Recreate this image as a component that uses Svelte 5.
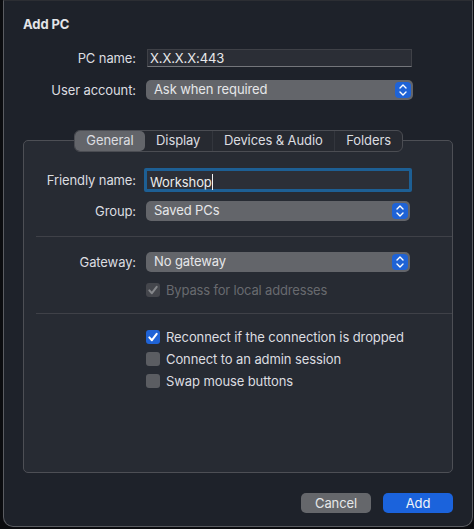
<script>
  const tabs = ['General', 'Display', 'Devices & Audio', 'Folders'];
  const options = [
    { label: 'Reconnect if the connection is dropped', on: true },
    { label: 'Connect to an admin session', on: false },
    { label: 'Swap mouse buttons', on: false }
  ];
</script>

{#snippet arrows()}
  <span class="stepper">
    <svg width="10" height="14" viewBox="0 0 10 14" fill="none" stroke="#fff" stroke-width="1.4" stroke-linecap="round" stroke-linejoin="round">
      <path d="M2 5 L5 2 L8 5" />
      <path d="M2 9 L5 12 L8 9" />
    </svg>
  </span>
{/snippet}

{#snippet tick()}
  <svg width="12" height="12" viewBox="0 0 12 12" fill="none" stroke="currentColor" stroke-width="2" stroke-linecap="round" stroke-linejoin="round">
    <path d="M2.3 6.4 L4.9 9.2 L9.7 2.8" />
  </svg>
{/snippet}

<div class="sheet">
  <h1>Add PC</h1>

  <div class="top-form">
    <span class="label">PC name:</span>
    <div class="field">X.X.X.X:443</div>
    <span class="label">User account:</span>
    <div class="popup wide">Ask when required {@render arrows()}</div>
  </div>

  <div class="panel">
    <div class="tabs">
      {#each tabs as tab, i}
        <div class="tab" class:active={i === 0}>{tab}</div>
      {/each}
    </div>

    <div class="inner-form first">
      <span class="label">Friendly name:</span>
      <div class="focus-field">Workshop<i class="caret"></i></div>
      <span class="label">Group:</span>
      <div class="popup">Saved PCs {@render arrows()}</div>
    </div>

    <hr />

    <div class="inner-form">
      <span class="label">Gateway:</span>
      <div class="popup">No gateway {@render arrows()}</div>
    </div>
    <div class="check disabled bypass">
      <span class="box">{@render tick()}</span>
      Bypass for local addresses
    </div>

    <hr class="tight" />

    <div class="options">
      {#each options as opt}
        <div class="check">
          <span class="box" class:on={opt.on}>{#if opt.on}{@render tick()}{/if}</span>
          {opt.label}
        </div>
      {/each}
    </div>
  </div>

  <div class="actions">
    <button class="btn">Cancel</button>
    <button class="btn primary">Add</button>
  </div>
</div>

<style>
  :global(body) {
    margin: 0;
    background: #0b0c0f;
  }
  .sheet {
    box-sizing: border-box;
    width: 470px;
    height: 527px;
    margin-left: 3px;
    padding: 15px 19px 0 19px;
    background: #1e222a;
    border: 1px solid #5a5c61;
    border-top-color: #2c2e33;
    border-radius: 0 0 10px 10px;
    color: #dcdde0;
    font-family: Inter, "Liberation Sans", sans-serif;
    font-size: 13px;
    line-height: 16px;
    letter-spacing: -0.1px;
  }
  h1 {
    margin: 0;
    font-size: 13px;
    line-height: 16px;
    font-weight: 700;
    color: #e4e5e8;
  }
  .top-form {
    display: grid;
    grid-template-columns: 113px 267px;
    column-gap: 10px;
    row-gap: 13px;
    align-items: center;
    margin-top: 17px;
  }
  .label {
    text-align: right;
  }
  .field {
    box-sizing: border-box;
    height: 18px;
    margin: 0 1px;
    padding: 0 2px;
    line-height: 17px;
    background: #2b2e36;
    border: 1px solid #3f4147;
    border-bottom-color: #74767b;
    color: #e8e9eb;
  }
  .popup {
    position: relative;
    box-sizing: border-box;
    height: 20px;
    padding-left: 8px;
    line-height: 18px;
    background: #63656a;
    border-radius: 5px;
    color: #e6e7e9;
  }
  .stepper {
    position: absolute;
    top: 2px;
    right: 2px;
    width: 16px;
    height: 16px;
    display: flex;
    align-items: center;
    justify-content: center;
    background: #1f63d6;
    border-radius: 4px;
  }
  .panel {
    box-sizing: border-box;
    height: 333px;
    margin-top: 40px;
    padding: 0 12px;
    background: #272b33;
    border: 1px solid #4d4f55;
    border-radius: 5px;
  }
  .tabs {
    display: flex;
    width: max-content;
    box-sizing: border-box;
    height: 22px;
    margin: -11px 0 0 38px;
    background: #272a31;
    border: 1px solid #4b4d53;
    border-radius: 6px;
  }
  .tab {
    padding: 0 11.3px;
    line-height: 19px;
    color: #dcdde0;
    border-right: 1px solid #33363d;
  }
  .tab:last-child {
    border-right: 0;
  }
  .tab.active {
    background: #63656a;
    border-radius: 5px;
    border-right: 0;
  }
  .inner-form {
    display: grid;
    grid-template-columns: 100px 264px;
    column-gap: 10px;
    row-gap: 9px;
    align-items: center;
  }
  .inner-form.first {
    margin-top: 16px;
  }
  .focus-field {
    box-sizing: border-box;
    height: 24px;
    margin: 0 -2px;
    padding: 2px 0 0 3px;
    line-height: 18px;
    background: #2c2f37;
    border: 3px solid #1d5f94;
    border-radius: 2px;
    color: #eceded;
  }
  .caret {
    display: inline-block;
    width: 1px;
    height: 16px;
    vertical-align: -3px;
    background: #f2f2f2;
  }
  hr {
    margin: 15px -12px 15px 0;
    border: 0;
    border-top: 1px solid #3f4148;
  }
  hr.tight {
    margin-top: 12px;
  }
  .check {
    display: flex;
    align-items: center;
    gap: 6px;
    height: 22px;
    margin-left: 110px;
    white-space: nowrap;
  }
  .box {
    box-sizing: border-box;
    width: 14px;
    height: 14px;
    display: flex;
    align-items: center;
    justify-content: center;
    background: #5b5d62;
    border-radius: 3px;
    color: #fff;
  }
  .box.on {
    background: #1f63d6;
  }
  .check.disabled {
    color: #686a6f;
  }
  .check.disabled .box {
    background: #44464c;
    color: #85878b;
  }
  .bypass {
    margin-top: 7px;
    letter-spacing: -0.17px;
  }
  .options {
    margin-top: -3px;
  }
  .actions {
    display: flex;
    justify-content: flex-end;
    gap: 12px;
    margin-top: 20px;
  }
  .btn {
    width: 70px;
    height: 20px;
    padding: 0;
    border: 0;
    border-radius: 5px;
    background: #65676b;
    color: #e6e7e9;
    font: inherit;
    letter-spacing: inherit;
    line-height: 20px;
  }
  .btn.primary {
    background: #1b63dc;
    color: #f2f4f8;
  }
</style>
